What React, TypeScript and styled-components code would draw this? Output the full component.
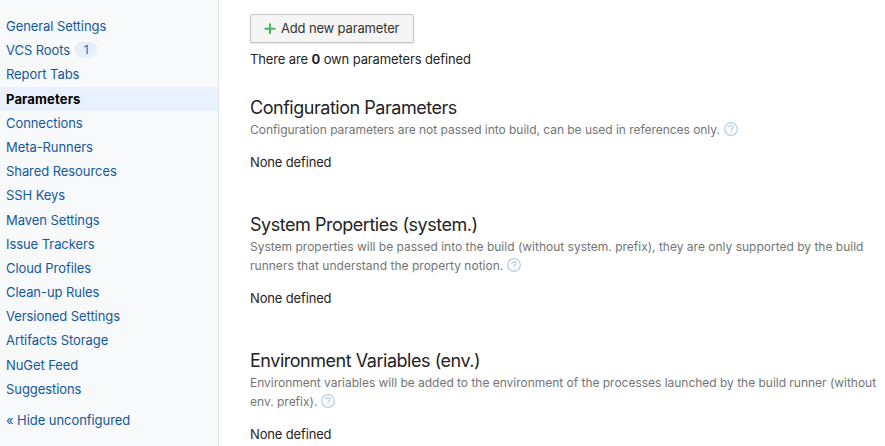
import React from "react";
import styled, { createGlobalStyle } from "styled-components";

const GlobalStyle = createGlobalStyle`
  body {
    margin: 0;
    background: #fff;
    color: #1f2326;
    font: 13px/20px Inter, "Liberation Sans", sans-serif;
    overflow: hidden;
  }
`;

const Page = styled.div`
  display: flex;
  height: 446px;
  overflow: hidden;
`;

const Sidebar = styled.nav`
  box-sizing: border-box;
  flex: none;
  width: 219px;
  padding-top: 14.5px;
  background: #f7f9fb;
  border-right: 1px solid #dfe2ea;
`;

const NavItem = styled.a<{ $active?: boolean }>`
  box-sizing: border-box;
  display: flex;
  align-items: center;
  gap: 5px;
  height: 24.19px;
  padding: 0 0 1.19px 6px;
  white-space: nowrap;
  color: ${(p) => (p.$active ? "#000" : "#1458a0")};
  background: ${(p) => (p.$active ? "#e8f1fd" : "transparent")};
  font-weight: ${(p) => (p.$active ? 700 : 400)};
  letter-spacing: ${(p) => (p.$active ? "0.15px" : "-0.07px")};
`;

const Count = styled.span`
  box-sizing: border-box;
  width: 22px;
  height: 16px;
  border-radius: 8px;
  background: #e6f0fa;
  box-shadow: inset 0 1px 0 #d8e6f5;
  color: #1a5fc8;
  font-size: 12px;
  line-height: 16px;
  text-align: center;
`;

const ToggleLink = styled.a`
  display: block;
  margin: 8.4px 0 0 6px;
  color: #1458a0;
  letter-spacing: -0.06px;
`;

const Main = styled.main`
  flex: 1;
  padding: 14px 0 0 31px;
`;

const AddButton = styled.button`
  display: flex;
  align-items: center;
  gap: 5px;
  box-sizing: border-box;
  width: 164px;
  height: 29px;
  padding: 0 13px 0 13px;
  border: 1px solid #c6c6c6;
  border-radius: 2px;
  background: #f5f5f5;
  box-shadow: 0 1px 2px rgba(0, 0, 0, 0.1);
  color: #333;
  font: 13px/20px Inter, sans-serif;
  letter-spacing: -0.16px;
  white-space: nowrap;
`;

const ButtonText = styled.span`
  padding-bottom: 1px;
`;

const Summary = styled.p`
  margin: 6px 0 0;
  letter-spacing: -0.13px;
`;

const Section = styled.section<{ $top: number }>`
  margin-top: ${(p) => p.$top}px;
`;

const Title = styled.h2`
  margin: 0;
  font-size: 18px;
  line-height: 24px;
  font-weight: 400;
  letter-spacing: -0.47px;
`;

const Note = styled.div<{ $spacing: number }>`
  color: #737577;
  font-size: 12px;
  line-height: 19px;
  letter-spacing: ${(p) => p.$spacing}px;
  white-space: nowrap;
`;

const Empty = styled.p`
  margin: 13px 0 0;
  letter-spacing: -0.15px;
`;

const HelpSvg = styled.svg`
  margin-left: 4px;
  vertical-align: -2px;
`;

function Help() {
  return (
    <HelpSvg width="14" height="14" viewBox="0 0 14 14" fill="none" stroke="#b3cfe9">
      <circle cx="7" cy="7" r="6.3" strokeWidth="1.3" />
      <path d="M5 5.4C5 4.2 5.9 3.6 7 3.6s2 .7 2 1.8C9 6.8 7 6.8 7 8.4M7 9.4v1.3" strokeWidth="1.3" />
    </HelpSvg>
  );
}

const items = [
  "General Settings", "VCS Roots", "Report Tabs", "Parameters", "Connections",
  "Meta-Runners", "Shared Resources", "SSH Keys", "Maven Settings", "Issue Trackers",
  "Cloud Profiles", "Clean-up Rules", "Versioned Settings", "Artifacts Storage",
  "NuGet Feed", "Suggestions",
];

const sections = [
  {
    title: "Configuration Parameters",
    top: 27,
    lines: [{ text: "Configuration parameters are not passed into build, can be used in references only.", spacing: -0.034 }],
  },
  {
    title: "System Properties (system.)",
    top: 41,
    lines: [
      { text: "System properties will be passed into the build (without system. prefix), they are only supported by the build", spacing: 0 },
      { text: "runners that understand the property notion.", spacing: 0.02 },
    ],
  },
  {
    title: "Environment Variables (env.)",
    top: 41,
    lines: [
      { text: "Environment variables will be added to the environment of the processes launched by the build runner (without", spacing: -0.02 },
      { text: "env. prefix).", spacing: 0 },
    ],
  },
];

export default function App() {
  return (
    <Page>
      <GlobalStyle />
      <Sidebar>
        {items.map((name) => (
          <NavItem key={name} $active={name === "Parameters"}>
            <span>{name}</span>
            {name === "VCS Roots" && <Count>1</Count>}
          </NavItem>
        ))}
        <ToggleLink>« Hide unconfigured</ToggleLink>
      </Sidebar>
      <Main>
        <AddButton>
          <svg width="12" height="12" viewBox="0 0 12 12" stroke="#44bb5b" strokeWidth="2">
            <path d="M6 .5v10.5M.5 5.8h11" />
          </svg>
          <ButtonText>Add new parameter</ButtonText>
        </AddButton>
        <Summary>There are <b>0</b> own parameters defined</Summary>
        {sections.map((s) => (
          <Section key={s.title} $top={s.top}>
            <Title>{s.title}</Title>
            {s.lines.map((line, i) => (
              <Note key={line.text} $spacing={line.spacing}>
                {line.text}
                {i === s.lines.length - 1 && <Help />}
              </Note>
            ))}
            <Empty>None defined</Empty>
          </Section>
        ))}
      </Main>
    </Page>
  );
}
